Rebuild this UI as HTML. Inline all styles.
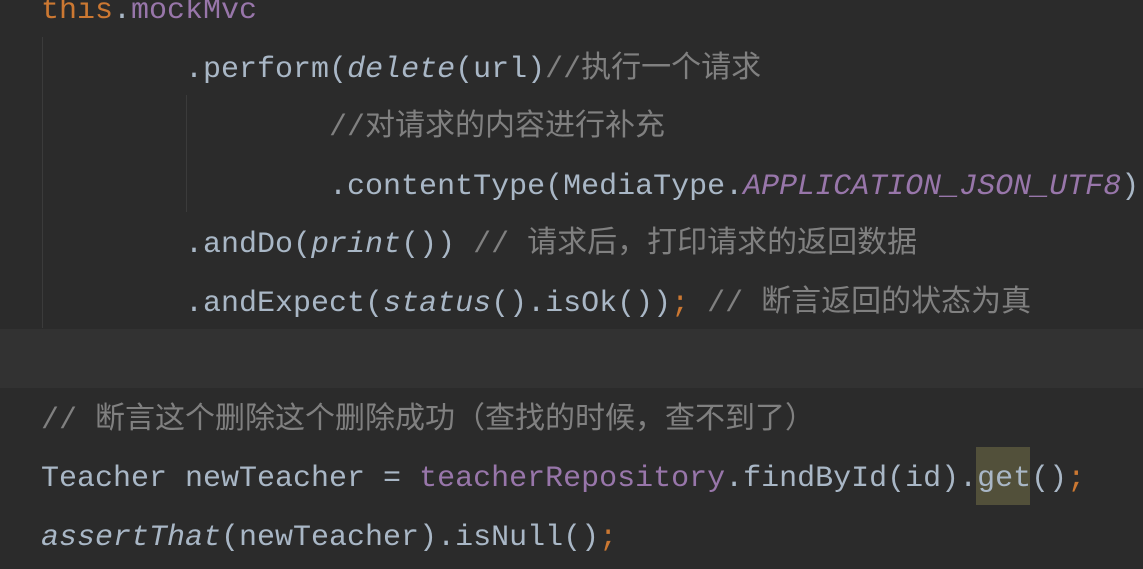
<!DOCTYPE html>
<html><head><meta charset="utf-8"><style>
body{margin:0;width:1143px;height:569px;background:#2b2b2b;overflow:hidden;position:relative;font-family:"Liberation Mono","Noto Sans CJK SC",monospace;font-size:30px;color:#a9b7c6}
.l{position:absolute;left:41px;height:58.6px;line-height:58.6px;white-space:pre}
.k{color:#cc7832}.p{color:#9876aa}.c{color:#808080}.i{font-style:italic}
.hl{position:absolute;left:0;width:1143px;top:329px;height:59px;background:#323232}
.g{position:absolute;width:1px;background:#3b3b3b}
.get{position:absolute;left:976px;top:447px;width:54px;height:58px;background:#52503a}
</style></head><body>
<div class="hl"></div>
<div class="get"></div>
<div class="g" style="left:42px;top:37px;height:291px"></div>
<div class="g" style="left:186px;top:95px;height:117px"></div>
<div class="l" style="top:-18px"><span class="k">this</span>.<span class="p">mockMvc</span></div>
<div class="l" style="top:40.6px">        .perform(<span class="i">delete</span>(url)<span class="c">//执行一个请求</span></div>
<div class="l" style="top:99.2px">                <span class="c">//对请求的内容进行补充</span></div>
<div class="l" style="top:157.8px">                .contentType(MediaType.<span class="p i">APPLICATION_JSON_UTF8</span>)</div>
<div class="l" style="top:216.4px">        .andDo(<span class="i">print</span>()) <span class="c">// 请求后，打印请求的返回数据</span></div>
<div class="l" style="top:275px">        .andExpect(<span class="i">status</span>().isOk())<span class="k">;</span> <span class="c">// 断言返回的状态为真</span></div>
<div class="l" style="top:392px"><span class="c">// 断言这个删除这个删除成功（查找的时候，查不到了）</span></div>
<div class="l" style="top:450px">Teacher newTeacher = <span class="p">teacherRepository</span>.findById(id).get()<span class="k">;</span></div>
<div class="l" style="top:509.2px"><span class="i">assertThat</span>(newTeacher).isNull()<span class="k">;</span></div>
</body></html>
